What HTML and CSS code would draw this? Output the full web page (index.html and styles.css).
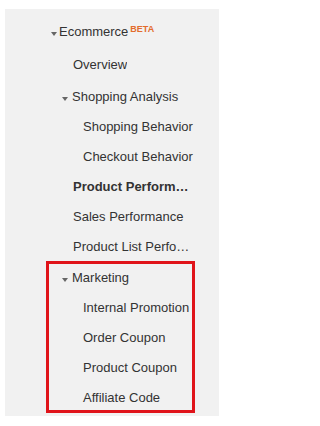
FILE: index.html
```html
<!DOCTYPE html>
<html lang="en">
<head>
<meta charset="utf-8">
<title>Ecommerce menu</title>
<link rel="stylesheet" href="styles.css">
</head>
<body>
<nav class="panel">
  <div class="row lvl1 first">
    <span class="arrow"></span>
    <span class="label">Ecommerce<span class="beta">BETA</span></span>
  </div>
  <div class="row lvl2 overview"><span class="label short">Overview</span></div>
  <div class="row lvl2a shopping">
    <span class="arrow"></span>
    <span class="label">Shopping Analysis</span>
  </div>
  <div class="row lvl3"><span class="label">Shopping Behavior</span></div>
  <div class="row lvl3"><span class="label">Checkout Behavior</span></div>
  <div class="row lvl2"><span class="label short bold">Product Performance</span></div>
  <div class="row lvl2"><span class="label short">Sales Performance</span></div>
  <div class="row lvl2"><span class="label short">Product List Performance</span></div>
  <div class="group highlighted">
    <div class="row lvl2a">
      <span class="arrow"></span>
      <span class="label">Marketing</span>
    </div>
    <div class="row lvl3"><span class="label">Internal Promotion</span></div>
    <div class="row lvl3"><span class="label">Order Coupon</span></div>
    <div class="row lvl3"><span class="label">Product Coupon</span></div>
    <div class="row lvl3"><span class="label">Affiliate Code</span></div>
  </div>
</nav>
</body>
</html>
```
FILE: styles.css
```css
html, body {
  margin: 0;
  padding: 0;
  background: #ffffff;
}

body {
  font-family: "Liberation Sans", Arial, sans-serif;
  font-size: 13px;
  color: #333333;
}

.panel {
  width: 214px;
  margin: 9px 0 0 5px;
  padding: 8px 0 3px 0;
  background: #f1f1f1;
}

.row {
  display: flex;
  align-items: flex-start;
  height: 30px;
  line-height: 30px;
  white-space: nowrap;
}

.lvl1 { padding-left: 46px; }
.lvl2 { padding-left: 68px; }
.lvl2a { padding-left: 57px; }
.lvl3 { padding-left: 78px; }

.first { margin-bottom: 3px; }
.overview { margin-bottom: 2px; }

.arrow {
  flex: none;
  width: 0;
  height: 0;
  margin-top: 15px;
  border-left: 3px solid transparent;
  border-right: 3px solid transparent;
  border-top: 4px solid #666666;
  margin-right: 4px;
}

.lvl1 .arrow { margin-right: 2px; }

.label {
  display: block;
}

.short {
  max-width: 118px;
  overflow: hidden;
  text-overflow: ellipsis;
}

.bold { font-weight: bold; }

.beta {
  font-size: 9px;
  font-weight: bold;
  color: #e36c2c;
  margin-left: 2px;
  vertical-align: 4px;
  line-height: 0;
}

.group {
  position: relative;
  margin-top: 1px;
}

.highlighted::after {
  content: "";
  position: absolute;
  left: 41px;
  top: -2px;
  width: 149px;
  bottom: 0;
  box-sizing: border-box;
  border: 3px solid #e0131a;
  pointer-events: none;
}
```
